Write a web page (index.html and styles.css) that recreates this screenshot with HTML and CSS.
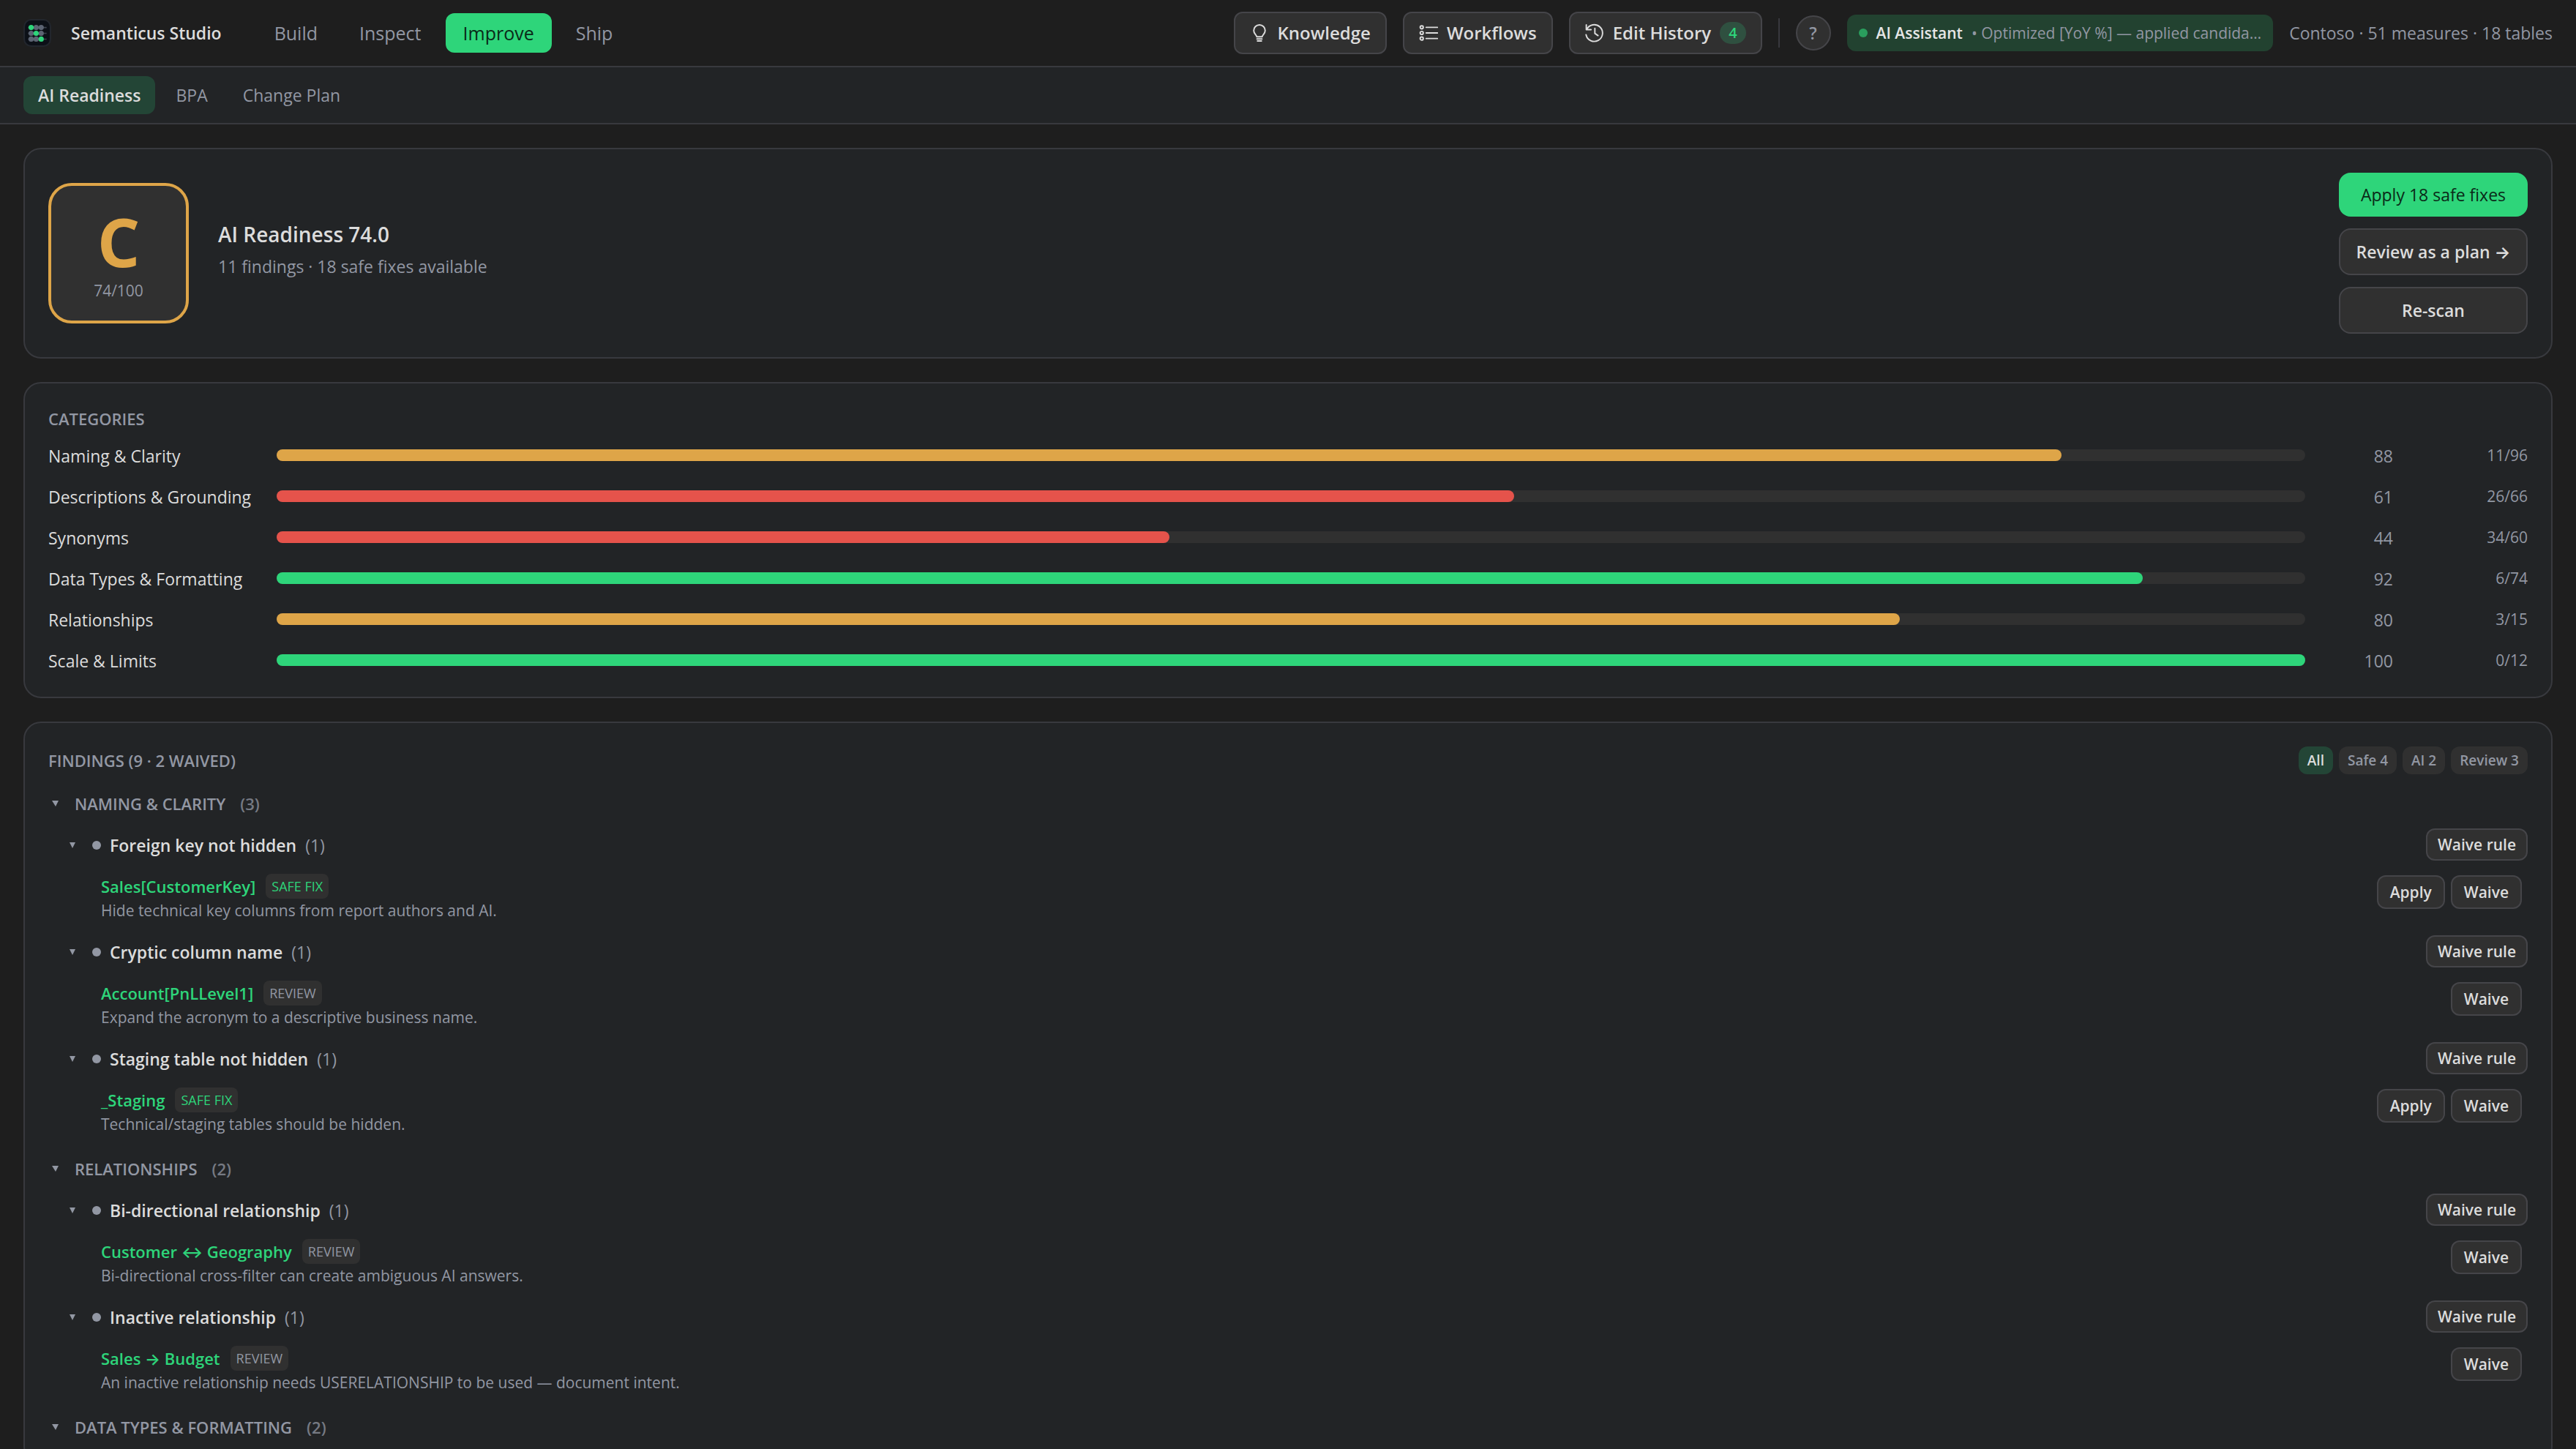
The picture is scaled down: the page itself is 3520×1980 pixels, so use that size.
FILE: index.html
```html
<!DOCTYPE html>
<html lang="en">
<head>
    <meta charset="UTF-8">
    <meta name="viewport" content="width=device-width, initial-scale=1.0">
    <title>Semanticus Studio</title>
    <link rel="stylesheet" href="styles.css">
</head>
<body>
    <header class="topbar">
        <svg class="logo" viewBox="0 0 36 36" aria-hidden="true">
            <rect x="1" y="1" width="34" height="34" rx="9" fill="#0c1017" stroke="#22262d" stroke-width="2"/>
            <path d="M6 11h24M6 18.500h24M6 26h24" stroke="#3c434f" stroke-width="1.500"/>
            <g fill="#5c6473">
                <circle cx="16.500" cy="11" r="3.400"/><circle cx="23" cy="11" r="3.400"/>
                <circle cx="10" cy="18.500" r="3.400"/><circle cx="23" cy="18.500" r="3.400"/>
                <circle cx="10" cy="26" r="3.400"/><circle cx="16.500" cy="26" r="3.400"/>
            </g>
            <g fill="#2ed57a">
                <circle cx="10" cy="11" r="3.400"/><circle cx="16.500" cy="18.500" r="3.400"/><circle cx="23" cy="26" r="3.400"/>
            </g>
        </svg>
        <h1 class="brand">Semanticus Studio</h1>
        <nav class="tabs">
            <button class="tab">Build</button>
            <button class="tab">Inspect</button>
            <button class="tab active">Improve</button>
            <button class="tab">Ship</button>
        </nav>
        <div class="tools">
            <button class="btn tool">
                <svg class="icon" viewBox="0 0 16 16" aria-hidden="true">
                    <path d="M5.700 11.200c0-1.500-2.500-2.400-2.500-5.200a4.800 4.800 0 0 1 9.600 0c0 2.800-2.500 3.700-2.500 5.200zM5.900 13.100h4.200M6.300 14.800h3.400"/>
                </svg>
                Knowledge
            </button>
            <button class="btn tool">
                <svg class="icon" viewBox="0 0 16 16" aria-hidden="true">
                    <circle cx="2.300" cy="3.300" r="1.300"/><circle cx="2.300" cy="8" r="1.300"/><circle cx="2.300" cy="12.700" r="1.300"/>
                    <path d="M6 3.300h9.500M6 8h9.500M6 12.700h9.500"/>
                </svg>
                Workflows
            </button>
            <button class="btn tool">
                <svg class="icon" viewBox="0 0 16 16" aria-hidden="true">
                    <path d="M1 1.200v4h4M1.300 5.200a7 7 0 1 1-.5 4.300M8.200 4.200v4.200l2.600 1.800"/>
                </svg>
                Edit History
                <span class="badge">4</span>
            </button>
            <span class="divider"></span>
            <button class="help" aria-label="Help">?</button>
            <div class="status">
                <span class="status-dot"></span>
                <strong class="status-name">AI Assistant</strong>
                <span class="status-text">• Optimized [YoY %] — applied candida…</span>
            </div>
            <span class="model">Contoso · 51 measures · 18 tables</span>
        </div>
    </header>

    <nav class="subnav">
        <button class="subtab active">AI Readiness</button>
        <button class="subtab">BPA</button>
        <button class="subtab">Change Plan</button>
    </nav>

    <main class="content">
        <section class="card hero">
            <div class="grade">
                <span class="grade-letter">C</span>
                <span class="grade-score">74/100</span>
            </div>
            <div class="hero-info">
                <h2 class="hero-title">AI Readiness 74.0</h2>
                <p class="hero-sub">11 findings · 18 safe fixes available</p>
            </div>
            <div class="hero-actions">
                <button class="btn primary">Apply 18 safe fixes</button>
                <button class="btn">Review as a plan →</button>
                <button class="btn">Re-scan</button>
            </div>
        </section>

        <section class="card">
            <h3 class="section-title">Categories</h3>
            <div class="categories">
                <div class="category">
                    <span class="name">Naming &amp; Clarity</span>
                    <div class="track"><div class="fill warn" style="width: 88%"></div></div>
                    <span class="score">88</span>
                    <span class="ratio">11/96</span>
                </div>
                <div class="category">
                    <span class="name">Descriptions &amp; Grounding</span>
                    <div class="track"><div class="fill bad" style="width: 61%"></div></div>
                    <span class="score">61</span>
                    <span class="ratio">26/66</span>
                </div>
                <div class="category">
                    <span class="name">Synonyms</span>
                    <div class="track"><div class="fill bad" style="width: 44%"></div></div>
                    <span class="score">44</span>
                    <span class="ratio">34/60</span>
                </div>
                <div class="category">
                    <span class="name">Data Types &amp; Formatting</span>
                    <div class="track"><div class="fill good" style="width: 92%"></div></div>
                    <span class="score">92</span>
                    <span class="ratio">6/74</span>
                </div>
                <div class="category">
                    <span class="name">Relationships</span>
                    <div class="track"><div class="fill warn" style="width: 80%"></div></div>
                    <span class="score">80</span>
                    <span class="ratio">3/15</span>
                </div>
                <div class="category">
                    <span class="name">Scale &amp; Limits</span>
                    <div class="track"><div class="fill good" style="width: 100%"></div></div>
                    <span class="score">100</span>
                    <span class="ratio">0/12</span>
                </div>
            </div>
        </section>

        <section class="card">
            <div class="findings-head">
                <h3 class="section-title">Findings (9 · 2 waived)</h3>
                <div class="chips">
                    <button class="chip active">All</button>
                    <button class="chip">Safe 4</button>
                    <button class="chip">AI 2</button>
                    <button class="chip">Review 3</button>
                </div>
            </div>

            <div class="groups">
                <div class="group">
                    <button class="group-head"><span class="caret"></span>Naming &amp; Clarity <span class="group-count">(3)</span></button>
                    <div class="rule">
                        <div class="rule-head">
                            <button class="rule-toggle"><span class="caret small"></span><span class="dot"></span>Foreign key not hidden <span class="count">(1)</span></button>
                            <button class="btn small">Waive rule</button>
                        </div>
                        <div class="finding">
                            <div>
                                <div class="finding-line"><a class="object" href="#">Sales[CustomerKey]</a><span class="tag safe">SAFE FIX</span></div>
                                <p class="hint">Hide technical key columns from report authors and AI.</p>
                            </div>
                            <div class="finding-actions">
                                <button class="btn small">Apply</button>
                                <button class="btn small">Waive</button>
                            </div>
                        </div>
                    </div>
                    <div class="rule">
                        <div class="rule-head">
                            <button class="rule-toggle"><span class="caret small"></span><span class="dot"></span>Cryptic column name <span class="count">(1)</span></button>
                            <button class="btn small">Waive rule</button>
                        </div>
                        <div class="finding">
                            <div>
                                <div class="finding-line"><a class="object" href="#">Account[PnLLevel1]</a><span class="tag">REVIEW</span></div>
                                <p class="hint">Expand the acronym to a descriptive business name.</p>
                            </div>
                            <div class="finding-actions">
                                <button class="btn small">Waive</button>
                            </div>
                        </div>
                    </div>
                    <div class="rule">
                        <div class="rule-head">
                            <button class="rule-toggle"><span class="caret small"></span><span class="dot"></span>Staging table not hidden <span class="count">(1)</span></button>
                            <button class="btn small">Waive rule</button>
                        </div>
                        <div class="finding">
                            <div>
                                <div class="finding-line"><a class="object" href="#">_Staging</a><span class="tag safe">SAFE FIX</span></div>
                                <p class="hint">Technical/staging tables should be hidden.</p>
                            </div>
                            <div class="finding-actions">
                                <button class="btn small">Apply</button>
                                <button class="btn small">Waive</button>
                            </div>
                        </div>
                    </div>
                </div>

                <div class="group">
                    <button class="group-head"><span class="caret"></span>Relationships <span class="group-count">(2)</span></button>
                    <div class="rule">
                        <div class="rule-head">
                            <button class="rule-toggle"><span class="caret small"></span><span class="dot"></span>Bi-directional relationship <span class="count">(1)</span></button>
                            <button class="btn small">Waive rule</button>
                        </div>
                        <div class="finding">
                            <div>
                                <div class="finding-line"><a class="object" href="#">Customer ↔ Geography</a><span class="tag">REVIEW</span></div>
                                <p class="hint">Bi-directional cross-filter can create ambiguous AI answers.</p>
                            </div>
                            <div class="finding-actions">
                                <button class="btn small">Waive</button>
                            </div>
                        </div>
                    </div>
                    <div class="rule">
                        <div class="rule-head">
                            <button class="rule-toggle"><span class="caret small"></span><span class="dot"></span>Inactive relationship <span class="count">(1)</span></button>
                            <button class="btn small">Waive rule</button>
                        </div>
                        <div class="finding">
                            <div>
                                <div class="finding-line"><a class="object" href="#">Sales → Budget</a><span class="tag">REVIEW</span></div>
                                <p class="hint">An inactive relationship needs USERELATIONSHIP to be used — document intent.</p>
                            </div>
                            <div class="finding-actions">
                                <button class="btn small">Waive</button>
                            </div>
                        </div>
                    </div>
                </div>

                <div class="group">
                    <button class="group-head"><span class="caret"></span>Data Types &amp; Formatting <span class="group-count">(2)</span></button>
                </div>
            </div>
        </section>
    </main>
</body>
</html>
```
FILE: styles.css
```css
:root {
    --bg: #1e1e1e;
    --panel: #222426;
    --raised: #303030;
    --line: #38393e;
    --btn-line: #454549;
    --text: #dcdcdc;
    --muted: #9297a3;
    --green: #2ed57a;
    --green-soft: #234536;
    --amber: #dea548;
    --red: #e5534b;
}
* {
    box-sizing: border-box;
    margin: 0;
}
body {
    display: flex;
    flex-direction: column;
    height: 100vh;
    overflow: hidden;
    background: var(--bg);
    color: var(--text);
    font: 23px/32px "Open Sans", Inter, sans-serif;
}
button {
    padding: 0;
    border: none;
    background: none;
    color: inherit;
    font: inherit;
    white-space: nowrap;
    cursor: pointer;
}

/* top bar */
.topbar {
    display: flex;
    align-items: center;
    height: 92px;
    padding: 0 32px;
    border-bottom: 2px solid var(--line);
    flex-shrink: 0;
}
.logo {
    width: 38px;
    height: 38px;
}
.brand {
    margin: 0 48px 0 27px;
    font-size: 23px;
    font-weight: 600;
}
.tabs {
    display: flex;
    gap: 9px;
}
.tab {
    height: 54px;
    padding: 0 24px;
    border-radius: 12px;
    color: var(--muted);
    font-size: 25px;
}
.tab.active {
    background: var(--green);
    color: #0a2a18;
}
.tools {
    display: flex;
    align-items: center;
    gap: 22px;
    margin-left: auto;
}
.btn {
    height: 64px;
    padding: 0 20px;
    border: 2px solid var(--btn-line);
    border-radius: 16px;
    background: var(--raised);
    font-weight: 600;
}
.btn.tool {
    display: flex;
    align-items: center;
    gap: 12px;
    height: 58px;
    border-radius: 12px;
    font-size: 24px;
}
.icon {
    width: 26px;
    height: 26px;
    fill: none;
    stroke: currentColor;
    stroke-width: 1.2;
    stroke-linecap: round;
    stroke-linejoin: round;
}
.badge {
    padding: 0 12px;
    border-radius: 15px;
    background: #2f5040;
    color: var(--green);
    font-size: 20px;
    line-height: 30px;
}
.divider {
    width: 2px;
    height: 40px;
    background: var(--line);
}
.help {
    width: 48px;
    height: 48px;
    border: 2px solid var(--btn-line);
    border-radius: 50%;
    background: var(--raised);
    color: var(--muted);
    font-weight: 600;
}
.status {
    display: flex;
    align-items: center;
    gap: 12px;
    height: 50px;
    padding: 0 16px;
    border-radius: 12px;
    background: #224230;
    color: var(--muted);
    font-size: 21px;
    white-space: nowrap;
}
.status-dot {
    width: 12px;
    height: 12px;
    border-radius: 50%;
    background: #2a9e5d;
}
.status-name {
    color: #e6e6e6;
    font-weight: 600;
}
.model {
    color: var(--muted);
    white-space: nowrap;
}

/* second level tabs */
.subnav {
    display: flex;
    align-items: center;
    gap: 8px;
    height: 78px;
    padding: 0 32px;
    border-bottom: 2px solid var(--line);
    background: var(--panel);
    flex-shrink: 0;
}
.subtab {
    height: 52px;
    padding: 0 20px;
    border-radius: 12px;
    color: var(--muted);
    font-weight: 500;
}
.subtab.active {
    background: var(--green-soft);
    color: var(--text);
    font-weight: 600;
}

/* page */
.content {
    display: flex;
    flex: 1;
    flex-direction: column;
    gap: 32px;
    min-height: 0;
    padding: 32px;
    overflow-y: auto;
    scrollbar-width: none;
}
.card {
    padding: 32px;
    border: 2px solid var(--line);
    border-radius: 24px;
    background: var(--panel);
    flex-shrink: 0;
}
.section-title {
    color: var(--muted);
    font-size: 22px;
    font-weight: 600;
    text-transform: uppercase;
}

/* score */
.hero {
    display: flex;
    align-items: center;
    gap: 40px;
}
.grade {
    display: flex;
    flex-direction: column;
    align-items: center;
    justify-content: center;
    width: 192px;
    height: 192px;
    border: 4px solid var(--amber);
    border-radius: 32px;
    background: var(--raised);
}
.grade-letter {
    color: var(--amber);
    font-size: 92px;
    font-weight: 700;
    line-height: 102px;
}
.grade-score {
    color: var(--muted);
    font-size: 21px;
}
.hero-info {
    padding-bottom: 12px;
}
.hero-title {
    margin-bottom: 8px;
    font-size: 28px;
    font-weight: 600;
    line-height: 40px;
}
.hero-sub {
    color: var(--muted);
}
.hero-actions {
    display: flex;
    flex-direction: column;
    gap: 16px;
    min-width: 258px;
    margin-left: auto;
}
.btn.primary {
    height: 60px;
    border: none;
    background: var(--green);
    color: #0a2a18;
    font-weight: 400;
}

/* categories */
.categories {
    display: flex;
    flex-direction: column;
    gap: 20px;
    margin-top: 16px;
}
.category {
    display: grid;
    grid-template-columns: 280px 1fr 88px 152px;
    align-items: center;
    gap: 32px;
    height: 36px;
}
.name,
.score {
    padding-top: 2px;
}
.track {
    height: 16px;
    border-radius: 8px;
    background: var(--raised);
}
.fill {
    height: 100%;
    border-radius: 8px;
}
.fill.good {
    background: var(--green);
}
.fill.warn {
    background: var(--amber);
}
.fill.bad {
    background: var(--red);
}
.score,
.ratio {
    color: var(--muted);
    text-align: right;
}
.ratio {
    font-size: 21px;
}

/* findings */
.findings-head {
    display: flex;
    align-items: center;
    justify-content: space-between;
}
.chips {
    display: flex;
    gap: 8px;
}
.chip {
    height: 38px;
    padding: 0 12px;
    border-radius: 12px;
    background: var(--raised);
    color: var(--muted);
    font-size: 19px;
    font-weight: 600;
}
.chip.active {
    background: var(--green-soft);
    color: var(--text);
}
.groups {
    display: flex;
    flex-direction: column;
    gap: 29px;
    margin-top: 24px;
}
.group {
    display: flex;
    flex-direction: column;
    gap: 18px;
}
.group-head {
    display: flex;
    align-items: center;
    gap: 16px;
    color: var(--muted);
    font-size: 22px;
    font-weight: 600;
    text-transform: uppercase;
}
.group-count {
    padding-left: 4px;
    opacity: 0.75;
}
.caret {
    width: 20px;
    height: 8px;
    background: var(--muted);
    clip-path: polygon(5px 0, 14px 0, 10px 100%);
}
.caret.small {
    clip-path: polygon(1px 0, 9px 0, 5px 100%);
}
.rule {
    display: flex;
    flex-direction: column;
    gap: 18px;
}
.rule-head {
    display: flex;
    align-items: center;
    justify-content: space-between;
    padding-left: 28px;
}
.rule-toggle {
    display: flex;
    align-items: center;
    gap: 12px;
    padding-top: 2px;
    font-weight: 600;
}
.dot {
    width: 12px;
    height: 12px;
    border-radius: 50%;
    background: var(--muted);
}
.count {
    color: var(--muted);
    font-weight: 400;
}
.btn.small {
    height: 44px;
    padding: 0 14px;
    border-radius: 12px;
    font-size: 21px;
}
.finding {
    display: flex;
    justify-content: space-between;
    padding: 0 8px 0 72px;
}
.finding-line {
    display: flex;
    align-items: center;
    gap: 14px;
}
.object {
    color: var(--green);
    font-size: 22px;
    font-weight: 600;
    text-decoration: none;
}
.tag {
    padding: 0 8px;
    border-radius: 8px;
    background: var(--raised);
    color: var(--muted);
    font-size: 18px;
    line-height: 34px;
}
.tag.safe {
    color: var(--green);
}
.hint {
    color: var(--muted);
    font-size: 21px;
}
.finding-actions {
    display: flex;
    align-items: flex-start;
    gap: 8px;
    padding-top: 2px;
}
.finding-actions .btn.small {
    height: 46px;
    padding: 0 16px;
}
```
